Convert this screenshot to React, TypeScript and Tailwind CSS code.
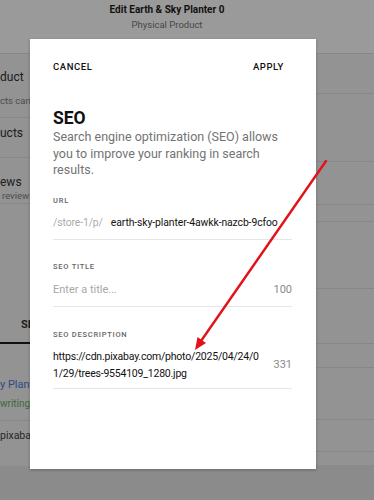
const rightRows = [40, 68, 43, 17, 67, 55, 24, 52, 32];

const Field = ({ label, children }: { label: string; children: React.ReactNode }) => (
  <div>
    <div className="text-[7.5px] font-medium uppercase leading-[10px] tracking-[0.1em] text-[#666]">{label}</div>
    {children}
  </div>
);

export default function App() {
  return (
    <div className="relative h-[500px] w-[374px] overflow-hidden bg-[#939393] font-['Roboto',sans-serif]">
      {/* page behind the overlay */}
      <header className="h-[54px] border-b border-[#888] bg-[#9a9a9a] pr-[40px] pt-[3px] text-center">
        <div className="text-[10px] font-bold leading-[13px] text-[#111]">Edit Earth &amp; Sky Planter 0</div>
        <div className="mt-[2px] text-[9.5px] leading-[13px] text-[#474747]">Physical Product</div>
      </header>

      <div className="flex h-[446px]">
        <div className="flex w-[60px] flex-col whitespace-nowrap text-[#1c1c1c]">
          <div className="h-[64px] border-b border-[#888] pt-[16px]">
            <div className="text-[12px] leading-[14px]">duct</div>
            <div className="mt-[11px] text-[9.5px] leading-[12px] text-[#4d4d4d]">cts can be</div>
          </div>
          <div className="h-[40px] border-b border-[#888] pt-[8px]">
            <div className="text-[12px] leading-[14px]">ucts</div>
          </div>
          <div className="h-[46px] border-b border-[#888] pt-[17px]">
            <div className="text-[12px] leading-[14px]">ews</div>
            <div className="mt-[1px] pl-[2px] text-[9.5px] leading-[12px] text-[#4d4d4d]">reviews</div>
          </div>
          <div className="flex h-[140px] flex-col justify-end">
            <div className="pb-[10px] pl-[21px] text-[11px] font-bold leading-[14px]">SEO</div>
            <div className="h-[2px] w-[40px] bg-[#111]" />
          </div>
          <div className="h-[77px] border-b border-[#888] pt-[34px]">
            <div className="text-[11px] leading-[14px] text-[#2c4a86]">y Planter</div>
            <div className="mt-[6px] text-[10px] leading-[12px] text-[#3c6a3c]">writing.</div>
          </div>
          <div className="h-[45px] pt-[8px]">
            <div className="text-[10.5px] leading-[14px] text-[#262626]">pixabay</div>
          </div>
          <div className="flex-1 bg-[#8b8b8b]" />
        </div>
        <div className="flex flex-1 flex-col">
          {rightRows.map((h, i) => (
            <div key={i} className="border-b border-[#878787]" style={{ height: h }} />
          ))}
          <div className="h-[13px]" />
          <div className="flex-1 bg-[#8b8b8b]" />
        </div>
      </div>

      {/* SEO modal */}
      <div className="absolute left-[30px] top-[39px] h-[430px] w-[286px] bg-white shadow-[0_1px_3px_rgba(0,0,0,0.25)]">
        <div className="flex justify-between pl-[23px] pr-[32px] pt-[22px] text-[9.5px] font-medium uppercase leading-[12px] tracking-[0.06em] text-[#111]">
          <span>Cancel</span>
          <span>Apply</span>
        </div>
        <div className="pl-[23px] pr-[24px]">
          <h2 className="mt-[34px] text-[17.5px] font-bold leading-[22px] text-[#111]">SEO</h2>
          <p className="pr-[14px] text-[12.5px] leading-[16.5px] text-[#737373]">
            Search engine optimization (SEO) allows you to improve your ranking in search results.
          </p>

          <div className="mt-[17px]">
            <Field label="URL">
              <div className="mt-[9px] flex gap-[8px] whitespace-nowrap border-b border-[#e6e6e6] pb-[8px] text-[10.4px] leading-[16px] tracking-[-0.01em]">
                <span className="text-[#ababab]">/store-1/p/</span>
                <span className="text-[#111]">earth-sky-planter-4awkk-nazcb-9cfoo</span>
              </div>
            </Field>
          </div>

          <div className="mt-[22px]">
            <Field label="SEO Title">
              <div className="mt-[10px] flex justify-between border-b border-[#e6e6e6] pb-[8px] text-[11px] leading-[16px]">
                <span className="text-[#a8a8a8]">Enter a title...</span>
                <span className="text-[#8a8a8a]">100</span>
              </div>
            </Field>
          </div>

          <div className="mt-[23px]">
            <Field label="SEO Description">
              <div className="mt-[8px] flex items-center justify-between gap-[6px] border-b border-[#e6e6e6] pb-[6px] leading-[17px]">
                <span className="break-all text-[10.5px] tracking-[-0.02em] text-[#111]">https://cdn.pixabay.com/photo/2025/04/24/01/29/trees-9554109_1280.jpg</span>
                <span className="text-[11px] text-[#8a8a8a]">331</span>
              </div>
            </Field>
          </div>
        </div>
      </div>

      {/* red annotation arrow */}
      <svg className="pointer-events-none absolute inset-0" width="374" height="500" viewBox="0 0 374 500">
        <line x1="326" y1="161" x2="201" y2="341" stroke="#e3121a" strokeWidth="2.4" strokeLinecap="round" />
        <polygon points="195,350 206,343 197.5,337" fill="#e3121a" />
      </svg>
    </div>
  );
}
